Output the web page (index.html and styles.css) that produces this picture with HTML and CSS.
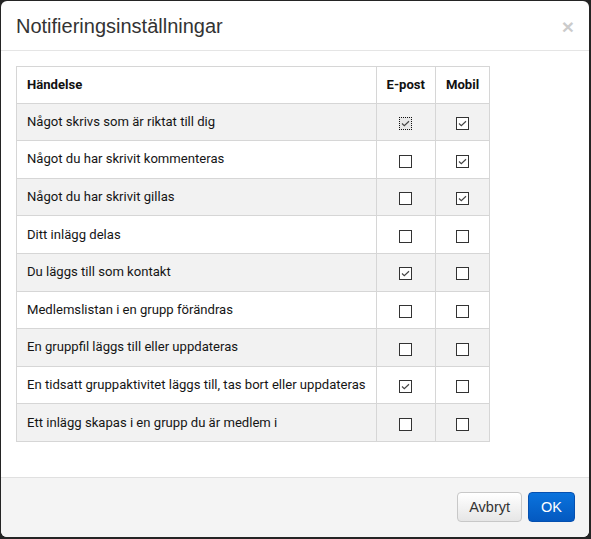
FILE: index.html
```html
<!DOCTYPE html>
<html lang="sv">
<head>
<meta charset="utf-8">
<title>Notifieringsinställningar</title>
<link rel="stylesheet" href="styles.css">
</head>
<body>
<div class="modal">
  <div class="modal-header">
    <h4 class="modal-title">Notifieringsinställningar</h4>
    <span class="close">×</span>
  </div>
  <div class="modal-body">
    <table class="settings">
      <thead>
        <tr><th class="event">Händelse</th><th class="col-mail">E-post</th><th class="col-mobile">Mobil</th></tr>
      </thead>
      <tbody>
        <tr><td>Något skrivs som är riktat till dig</td>
          <td class="c"><span class="cb focus"><svg viewBox="0 0 13 13"><path d="M3 6.5 L5.3 8.6 L10 4.3"/></svg></span></td>
          <td class="c"><span class="cb"><svg viewBox="0 0 13 13"><path d="M3 6.5 L5.3 8.6 L10 4.3"/></svg></span></td></tr>
        <tr><td>Något du har skrivit kommenteras</td>
          <td class="c"><span class="cb"></span></td>
          <td class="c"><span class="cb"><svg viewBox="0 0 13 13"><path d="M3 6.5 L5.3 8.6 L10 4.3"/></svg></span></td></tr>
        <tr><td>Något du har skrivit gillas</td>
          <td class="c"><span class="cb"></span></td>
          <td class="c"><span class="cb"><svg viewBox="0 0 13 13"><path d="M3 6.5 L5.3 8.6 L10 4.3"/></svg></span></td></tr>
        <tr><td>Ditt inlägg delas</td>
          <td class="c"><span class="cb"></span></td>
          <td class="c"><span class="cb"></span></td></tr>
        <tr><td>Du läggs till som kontakt</td>
          <td class="c"><span class="cb"><svg viewBox="0 0 13 13"><path d="M3 6.5 L5.3 8.6 L10 4.3"/></svg></span></td>
          <td class="c"><span class="cb"></span></td></tr>
        <tr><td>Medlemslistan i en grupp förändras</td>
          <td class="c"><span class="cb"></span></td>
          <td class="c"><span class="cb"></span></td></tr>
        <tr><td>En gruppfil läggs till eller uppdateras</td>
          <td class="c"><span class="cb"></span></td>
          <td class="c"><span class="cb"></span></td></tr>
        <tr><td>En tidsatt gruppaktivitet läggs till, tas bort eller uppdateras</td>
          <td class="c"><span class="cb"><svg viewBox="0 0 13 13"><path d="M3 6.5 L5.3 8.6 L10 4.3"/></svg></span></td>
          <td class="c"><span class="cb"></span></td></tr>
        <tr><td>Ett inlägg skapas i en grupp du är medlem i</td>
          <td class="c"><span class="cb"></span></td>
          <td class="c"><span class="cb"></span></td></tr>
      </tbody>
    </table>
  </div>
  <div class="modal-footer">
    <button class="btn btn-default">Avbryt</button>
    <button class="btn btn-primary">OK</button>
  </div>
</div>
</body>
</html>
```
FILE: styles.css
```css
html, body {
  margin: 0;
  padding: 0;
  background: #242424;
}
body {
  padding: 1px 2px 2px 1px;
  font-family: "Liberation Sans", Arial, sans-serif;
}
.modal {
  background: #fff;
  border-radius: 6px;
  height: 536px;
  display: flex;
  flex-direction: column;
  overflow: hidden;
}
.modal-header {
  display: flex;
  align-items: flex-start;
  justify-content: space-between;
  padding: 14px 15px 13px 15px;
  border-bottom: 1px solid #e5e5e5;
}
.modal-title {
  margin: 0;
  font-family: "Liberation Sans", Arial, sans-serif;
  font-weight: normal;
  font-size: 20px;
  line-height: 22px;
  color: #333;
}
.close {
  font-family: "Liberation Sans", Arial, sans-serif;
  font-size: 21px;
  font-weight: bold;
  line-height: 21px;
  color: #000;
  opacity: 0.2;
  margin-top: 1px;
}
.modal-body {
  flex: 1;
  padding: 15px;
}
.settings {
  border-collapse: collapse;
  font-family: Roboto, "Liberation Sans", sans-serif;
  font-size: 13.1px;
  color: #151515;
  border: 1px solid #d6d6d6;
}
.settings th, .settings td {
  border: 1px solid #d6d6d6;
  padding: 0 10px;
  height: 36.6px;
  line-height: 18px;
  text-align: left;
  white-space: nowrap;
}
.settings th {
  font-weight: bold;
  color: #111;
  height: 35.6px;
}
.settings th.col-mail, .settings th.col-mobile {
  text-align: center;
}
.settings .event {
  width: 338px;
}
.settings .col-mail {
  width: 38px;
}
.settings .col-mobile {
  width: 33px;
}
.settings tbody tr:nth-child(odd) {
  background: #f2f2f2;
}
.settings td.c {
  text-align: center;
  padding: 0;
}
.cb {
  display: inline-block;
  width: 11px;
  height: 11px;
  border: 1px solid #333;
  background: #fff;
  vertical-align: middle;
  position: relative;
  top: 1px;
}
.cb svg {
  display: block;
  margin: -1px 0 0 -1px;
  width: 13px;
  height: 13px;
  fill: none;
  stroke: #444;
  stroke-width: 1.2;
}
.cb.focus {
  border: 1px dotted #111;
  background: #e8e8e8;
}
.modal-footer {
  display: flex;
  justify-content: flex-end;
  gap: 6px;
  padding: 14px 14px 15px;
  background: #f4f4f4;
  border-top: 1px solid #e0e0e0;
}
.btn {
  font-family: "Liberation Sans", Arial, sans-serif;
  font-size: 14.5px;
  height: 30px;
  padding: 0 11px;
  border-radius: 4px;
  cursor: pointer;
}
.btn-default {
  color: #333;
  background: linear-gradient(#ffffff, #e6e6e6);
  border: 1px solid #c8c8c8;
}
.btn-primary {
  color: #fff;
  background: linear-gradient(#0a73dd, #0459c0);
  border: 1px solid #0550b0;
  padding: 0 12px;
}
```
